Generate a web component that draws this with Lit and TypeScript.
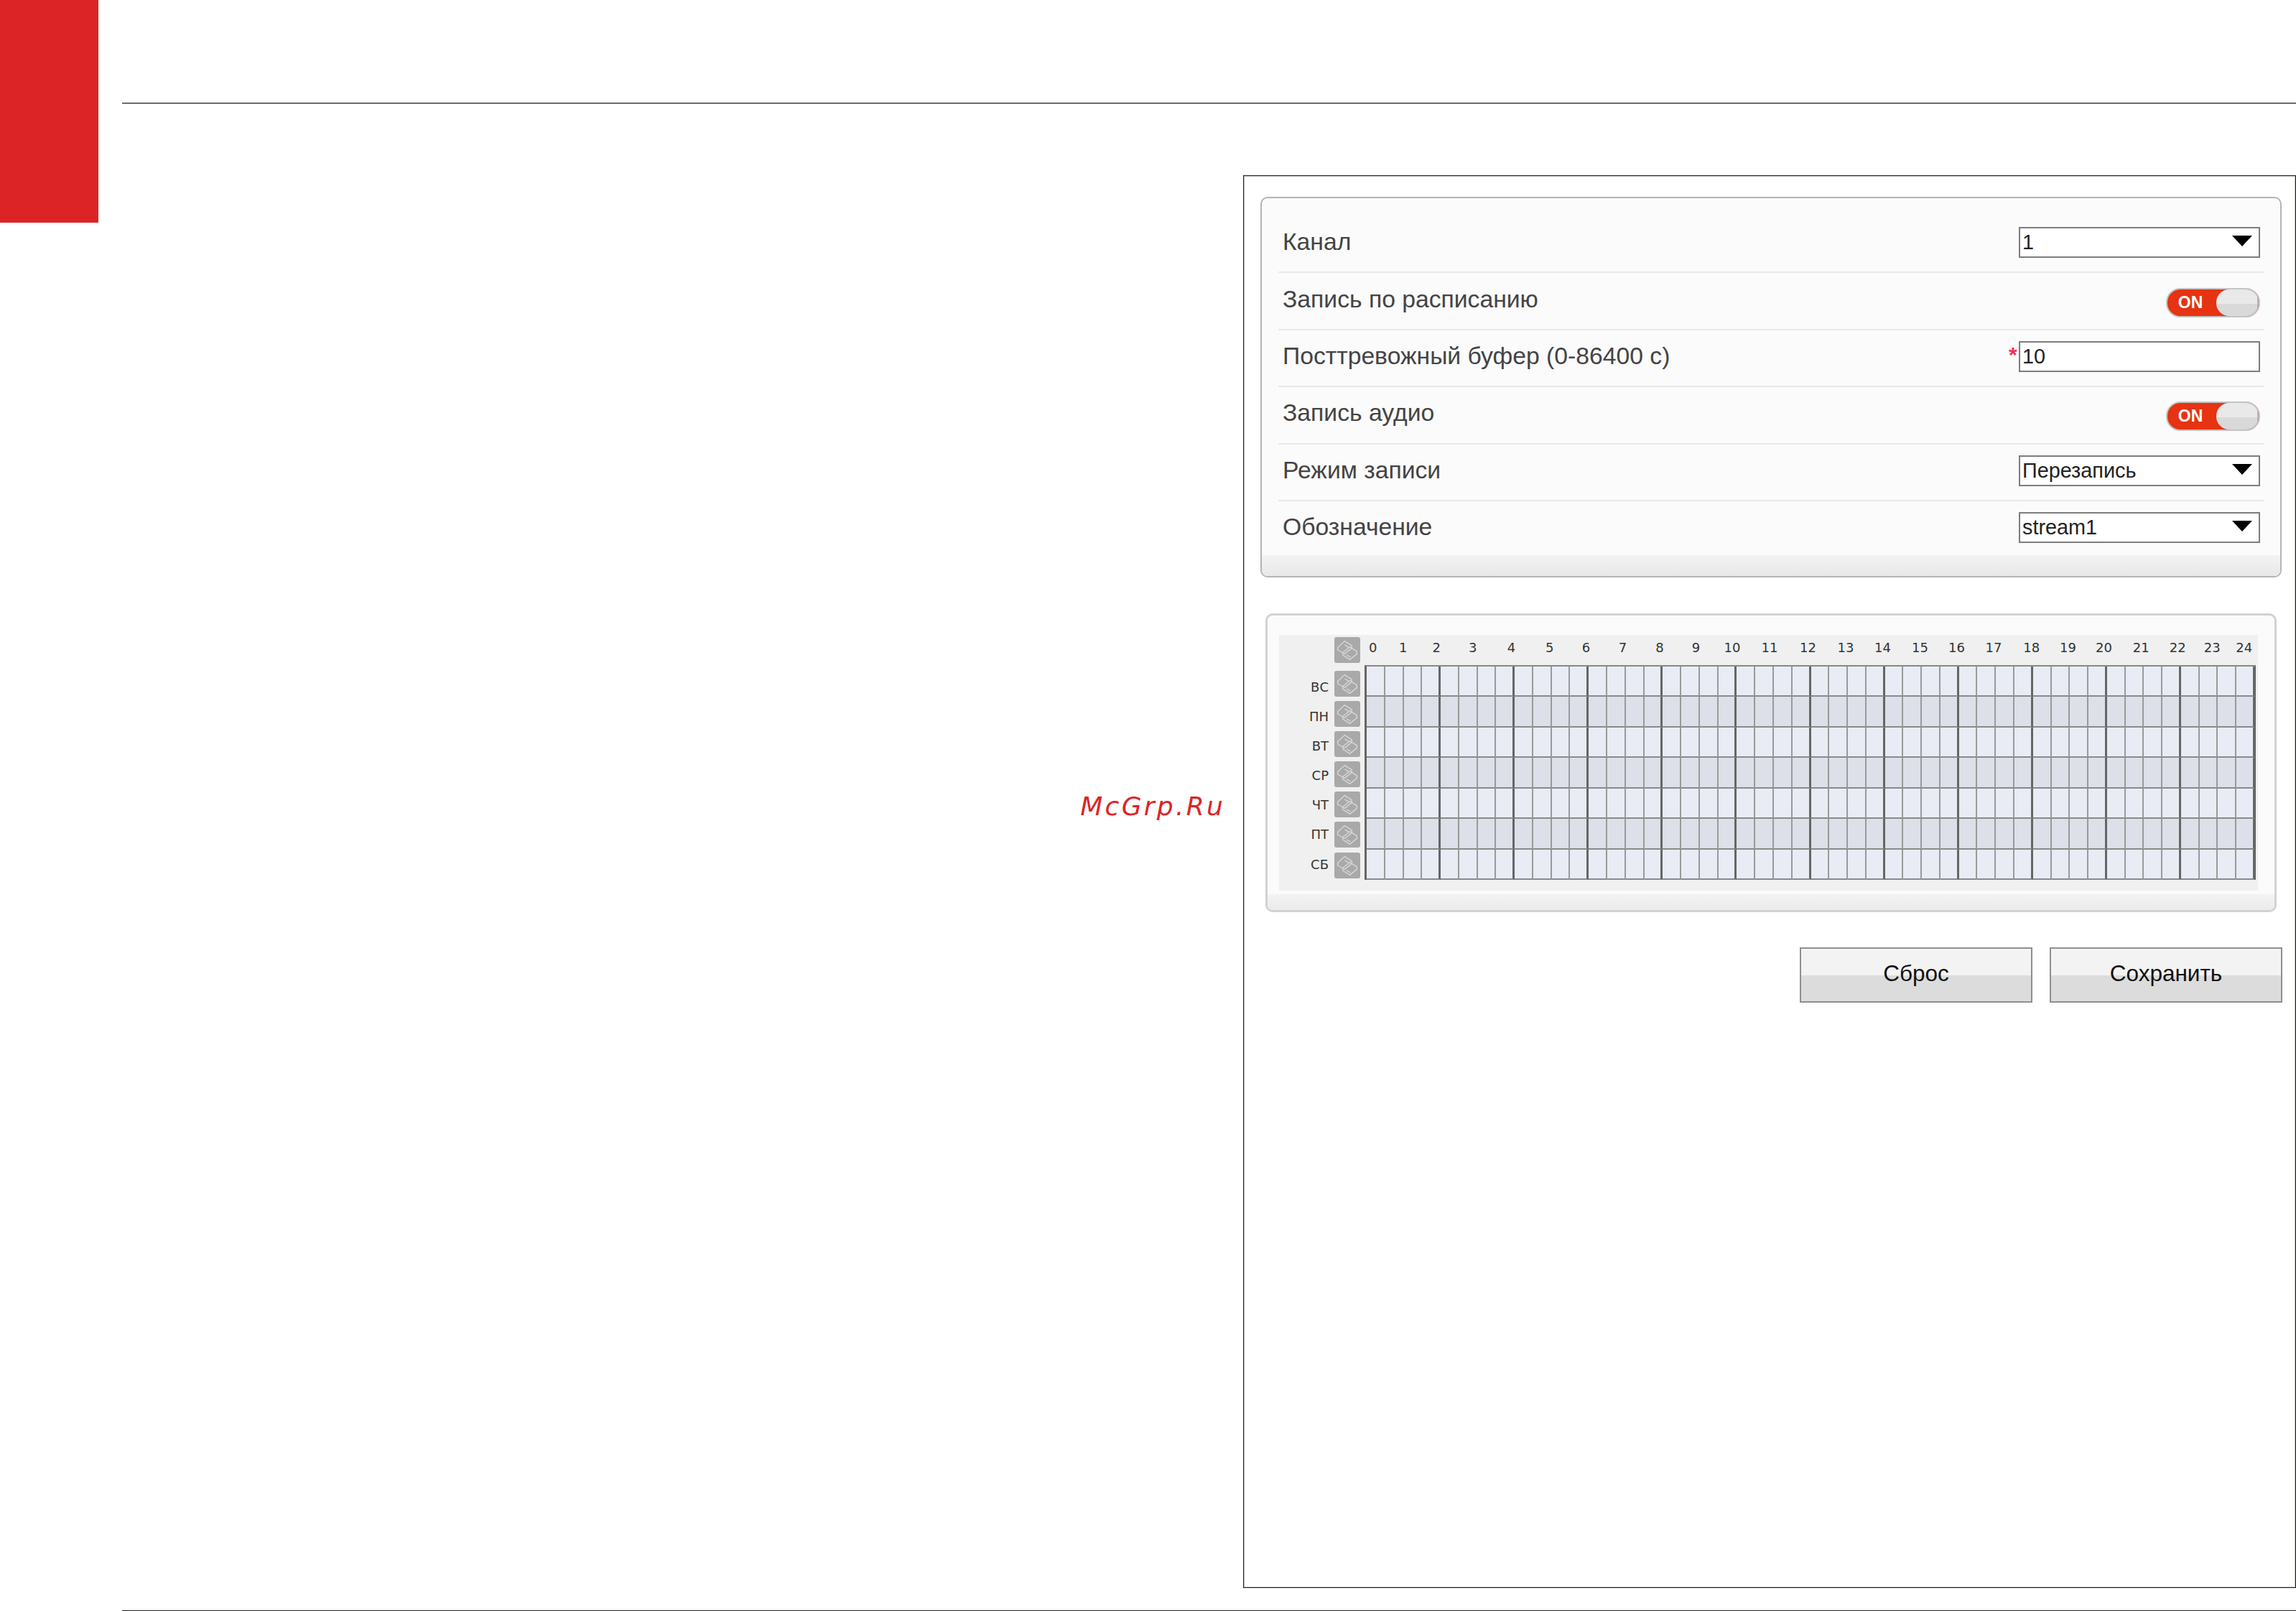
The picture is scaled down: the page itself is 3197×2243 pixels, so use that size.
import { LitElement, html, css, svg } from "lit";
import { customElement } from "lit/decorators.js";

const CENTERS = [1911.7, 1951.7, 2000, 2049, 2105, 2159, 2208, 2259, 2312, 2361, 2412, 2463, 2518, 2571, 2620, 2675, 2724, 2775, 2830, 2880, 2928, 2982, 3033, 3081, 3126];
const DAYS = ["ВС", "ПН", "ВТ", "СР", "ЧТ", "ПТ", "СБ"];

const hourWidths = CENTERS.map((c, i) => {
  const prev = i > 0 ? (CENTERS[i - 1] + c) / 2 : c - 20;
  const next = i < CENTERS.length - 1 ? (CENTERS[i + 1] + c) / 2 : c + 20;
  return next - prev;
});

const copyIcon = svg`<svg viewBox="0 0 36 36" width="32" height="32" fill="none" stroke="#d6d6d6" stroke-width="1.6" stroke-linejoin="round">
  <path d="M3 14 L14 4 L25 11 L25 15 L14 24 L3 18 Z"/>
  <path d="M11 22 L22 13 L33 20 L33 24 L22 33 L11 26 Z"/>
  <path d="M14 10 L20 14 M17 26 L23 29"/>
</svg>`;

@customElement("app-root")
export class AppRoot extends LitElement {
  static styles = css`
    :host { display: block; width: 3197px; height: 2243px; background: #fff; overflow: hidden; font-family: "Liberation Sans", Arial, sans-serif; }
    .page { display: flex; height: 2243px; }
    .side { width: 137px; flex: none; }
    .brand { height: 310px; background: #dc2427; }
    .content { flex: 1; margin-left: 33px; display: flex; flex-direction: column; min-width: 0; }
    .top-rule { margin-top: 143px; height: 1px; background: #1d1d1b; box-shadow: 0 1px 0 #c4c4c4; flex: none; }
    .main { margin-top: 100px; height: 1967px; display: flex; justify-content: flex-end; flex: none; }
    .bottom-rule { margin-top: 31px; height: 1px; background: #1d1d1b; flex: none; }
    .watermark { margin: 856px 25px 0 0; color: #dc2427; font: italic 36px "DejaVu Sans", sans-serif; letter-spacing: 3.25px; line-height: 46px; height: 46px; white-space: nowrap; }
    .frame { box-sizing: border-box; width: 1466px; height: 1967px; border: 1px solid #1d1d1b; box-shadow: inset 0 0 0 1px #c4c4c4; padding: 29px 19px 0 23px; flex: none; }

    .panel { box-sizing: border-box; height: 530px; background: #fbfbfb; border: 2px solid #b4b4b4; border-radius: 10px; display: flex; flex-direction: column; overflow: hidden; }
    .rows { margin: 25px 23px 0 23px; flex: none; }
    .row { box-sizing: border-box; height: 79.4px; padding: 0 5px 4px 6px; border-bottom: 2px solid #e6e8ee; display: flex; align-items: center; justify-content: space-between; }
    .row.last { height: 75px; border-bottom: none; padding-bottom: 2px; }
    .label { font-size: 33.7px; color: #444; margin-top: -3px; line-height: 40px; white-space: nowrap; }
    .ctl { display: flex; align-items: center; position: relative; }
    .box { box-sizing: border-box; width: 336px; height: 43px; border: 2px solid #7d7d7d; background: #fff; display: flex; align-items: center; justify-content: space-between; padding: 0 9px 0 3px; font-size: 28.8px; color: #222; }
    .arrow { width: 0; height: 0; border-left: 14px solid transparent; border-right: 14px solid transparent; border-top: 15px solid #000; margin-top: -4px; }
    .star { position: absolute; left: -14px; top: 4px; color: #f0305a; font-size: 30px; line-height: 30px; font-weight: 700; }
    .toggle { box-sizing: border-box; width: 131px; height: 41px; margin-top: 8px; border-radius: 20px; border: 2px solid #c4c4c4; display: flex; justify-content: flex-end; overflow: hidden; background: #e63312; position: relative; }
    .toggle .on { flex: 1; color: #fff; font-weight: 700; font-size: 23px; display: flex; align-items: center; justify-content: center; padding-right: 4px; box-sizing: border-box; }
    .toggle .knob { box-sizing: border-box; width: 59px; flex: none; border-radius: 18px 0 0 18px; border-right: 2px solid #b4b4b4; background: linear-gradient(#e9e9e9 55%, #d9d9d9 55%); }
    .panel-foot { flex: 1; background: linear-gradient(#f3f3f3, #e8e8e8); }

    .sched-panel { box-sizing: border-box; height: 416px; margin: 50px 7px 0 7px; background: #fbfbfb; border: 3px solid #d2d2d2; border-radius: 10px; display: flex; flex-direction: column; overflow: hidden; }
    .sched { box-sizing: border-box; height: 356px; margin: 27px 23px 0 16px; background: #f0f0f0; display: flex; padding-right: 3px; flex: none; font-family: "DejaVu Sans", sans-serif; font-size: 18px; color: #333; }
    .left { width: 119px; flex: none; display: flex; flex-direction: column; align-items: flex-end; padding-right: 6px; box-sizing: border-box; padding-top: 3px; }
    .icon { width: 36px; height: 36px; flex: none; background: #a9a9a9; border-radius: 3px; display: flex; align-items: center; justify-content: center; }
    .left .head { margin-bottom: 11px; }
    .day { height: 42.1px; flex: none; display: flex; justify-content: flex-end; gap: 8px; }
    .day span { line-height: 22px; white-space: nowrap; }
    .right { flex: 1; min-width: 0; display: flex; flex-direction: column; }
    .hours { height: 42px; flex: none; display: flex; margin-left: -8.3px; }
    .hours span { flex: none; text-align: center; margin-top: 7px; line-height: 22px; }
    .grid { height: 299px; flex: none; border-top: 2px solid #888; border-left: 3px solid #666; border-right: 1px solid #666; display: flex; flex-direction: column; box-sizing: border-box; }
    .grow { flex: 1; display: grid; grid-template-columns: repeat(48, 1fr); background: #e9ecf4; }
    .grow:nth-child(even) { background: #dde0e8; }
    .cell { box-sizing: border-box; border-right: 2px solid #9a9a9a; border-bottom: 2px solid #8a8a8a; }
    .cell:nth-child(4n) { border-right: 3px solid #666; }
    .sched-foot { flex: none; height: 22px; margin-top: 5px; background: linear-gradient(#f3f3f3, #ebebeb); }

    .buttons { display: flex; justify-content: flex-end; gap: 24px; margin: 49px -1px 0 0; }
    .btn { box-sizing: border-box; width: 324px; height: 77px; padding-bottom: 5px; border: 2px solid #8f8f8f; background: linear-gradient(#f3f3f3 50%, #dcdcdc 50%); font-size: 31.5px; color: #111; display: flex; align-items: center; justify-content: center; }
  `;

  private select(text: string) {
    return html`<div class="box"><span>${text}</span><span class="arrow"></span></div>`;
  }

  private toggle() {
    return html`<div class="toggle"><div class="on">ON</div><div class="knob"></div></div>`;
  }

  render() {
    return html`
      <div class="page">
        <div class="side"><div class="brand"></div></div>
        <div class="content">
          <div class="top-rule"></div>
          <div class="main">
            <div class="watermark">McGrp.Ru</div>
            <div class="frame">
              <div class="panel">
                <div class="rows">
                  <div class="row"><span class="label">Канал</span><div class="ctl">${this.select("1")}</div></div>
                  <div class="row"><span class="label">Запись по расписанию</span><div class="ctl">${this.toggle()}</div></div>
                  <div class="row"><span class="label">Посттревожный буфер (0-86400 с)</span><div class="ctl"><span class="star">*</span><div class="box"><span>10</span></div></div></div>
                  <div class="row"><span class="label">Запись аудио</span><div class="ctl">${this.toggle()}</div></div>
                  <div class="row"><span class="label">Режим записи</span><div class="ctl">${this.select("Перезапись")}</div></div>
                  <div class="row last"><span class="label">Обозначение</span><div class="ctl">${this.select("stream1")}</div></div>
                </div>
                <div class="panel-foot"></div>
              </div>
              <div class="sched-panel">
                <div class="sched">
                  <div class="left">
                    <div class="icon head">${copyIcon}</div>
                    ${DAYS.map((d, i) => html`<div class="day"><span style="margin-top:${12 - i}px">${d}</span><div class="icon">${copyIcon}</div></div>`)}
                  </div>
                  <div class="right">
                    <div class="hours">
                      ${CENTERS.map((_, i) => html`<span style="width:${hourWidths[i]}px">${i}</span>`)}
                    </div>
                    <div class="grid">
                      ${DAYS.map(() => html`<div class="grow">${Array.from({ length: 48 }, () => html`<div class="cell"></div>`)}</div>`)}
                    </div>
                  </div>
                </div>
                <div class="sched-foot"></div>
              </div>
              <div class="buttons">
                <div class="btn">Сброс</div>
                <div class="btn">Сохранить</div>
              </div>
            </div>
          </div>
          <div class="bottom-rule"></div>
        </div>
      </div>
    `;
  }
}
